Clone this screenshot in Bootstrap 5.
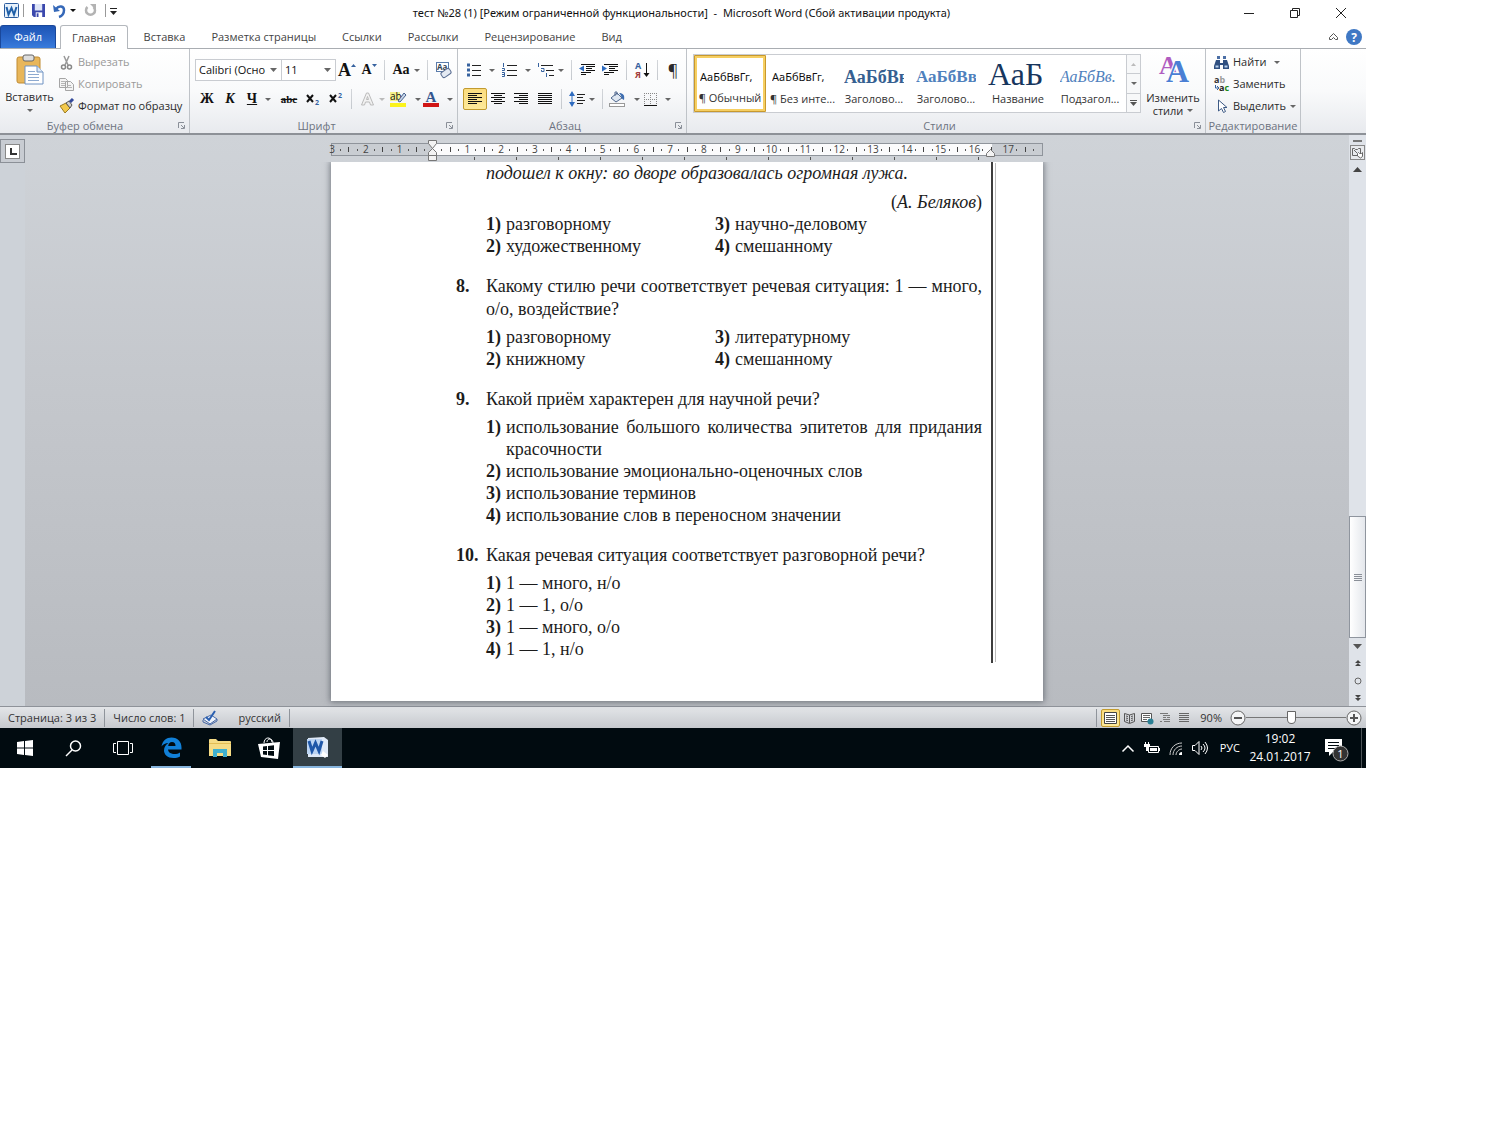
<!DOCTYPE html>
<html lang="ru">
<head>
<meta charset="utf-8">
<meta name="viewport" content="width=device-width, initial-scale=1">
<title>тест №28 (1) - Microsoft Word</title>
<link href="https://cdn.jsdelivr.net/npm/bootstrap@5.3.0/dist/css/bootstrap.min.css" rel="stylesheet">
<style>
body{font-family:"Open Sans","Noto Sans",sans-serif;font-size:11px;line-height:16px;color:#1e1e1e;background:#fff}
.desk{max-width:1366px}
svg{display:block;flex:none;overflow:visible}
.btn{--bs-btn-font-size:11px;--bs-btn-line-height:16px;--bs-btn-padding-x:0;--bs-btn-padding-y:0;--bs-btn-border-radius:2px;--bs-btn-color:#2b2b2b;--bs-btn-border-width:0;display:inline-flex;align-items:center;justify-content:center;white-space:nowrap}
.btn:disabled{color:#9a9a9a;opacity:1}
.caret{width:0;height:0;border:3px solid transparent;border-top-color:#666;border-bottom:0;flex:none}
.caret.dark{border-top-color:#111}
.caret.pale{border-top-color:#bbb}
.titlebar{height:25px}
.vline{width:1px;height:13px;background:#999}
.doc-title{font-family:"Noto Sans",sans-serif;font-size:11px;color:#111;padding-left:20px}
.winbtns{padding-right:2px}
.winbtn{width:46px;height:25px}
.tabs{height:24px;border-bottom:1px solid #a9adb2}
.tabs .btn{height:23px;padding:0 13px;color:#444}
.tabs .file-tab{width:56px;padding:0;color:#fff;background:linear-gradient(#1d55b5,#2a66c8 50%,#3a7cdc);border:1px solid #1a489b;border-bottom:0;border-radius:3px 3px 0 0;margin-right:4px}
.tabs .tab-on{height:24px;background:#fff;border:1px solid #b4b8bd;border-bottom:0;border-radius:3px 3px 0 0;padding:0 11px;margin-right:3px}
.ribbon{height:86px;background:linear-gradient(#fff,#f9fafb 50%,#e8eaee);border-bottom:2px solid #8d9197}
.rgroup{border-right:1px solid #bfc3c8;padding-top:2px}
.rlabel{height:15px;color:#6d7380;padding-right:4px}
.g-clip{width:190px}.g-font{width:268px;padding-left:5px}.g-para{width:229px;padding-left:5px}.g-style{width:519px;padding-left:6px}.g-edit{width:95px}
.bar{height:22px}
.row-a{margin-top:8px}.row-b{margin-top:7px}
.t22{width:22px;height:22px}.t24{width:24px;height:22px}.t32{width:32px;height:22px}.t34{width:34px;height:22px}.t36{width:36px;height:22px}
.sep{width:9px;height:20px;background:linear-gradient(#d3d6da,#c4c8cd) center/1px 100% no-repeat}
.t-on{background:linear-gradient(#fbdc7e,#fde99a);border:1px solid #c29b2f}
.combo{height:22px;border:1px solid #c9ccd1;border-radius:0;padding:0 14px 0 3px;font-size:11px;line-height:16px;color:#111;background-color:#fff;background-size:7px 4px;background-position:right 4px center;background-image:url("data:image/svg+xml,%3Csvg xmlns='http://www.w3.org/2000/svg' viewBox='0 0 7 4'%3E%3Cpath d='M0 0h7L3.5 4z' fill='%23666'/%3E%3C/svg%3E")}
.combo-name{width:87px}.combo-size{width:55px;margin-left:-1px}
.serif{font-family:"Liberation Serif",serif;font-weight:700;color:#111}
.s14{font-size:14px}.s16{font-size:16px}.s18{font-size:18px}
.paste{width:59px;padding-top:3px}
.gallery{height:59px;margin-top:3px;border:1px solid #c9ccd1;background:#fff}
.style-item{width:72px;height:57px;padding-bottom:3px;flex-direction:column;--bs-btn-border-radius:1px}
.style-item.picked{border:3px solid #f6cf62;padding-bottom:3px;outline:1px solid #c8992e;outline-offset:-1px}
.style-item .sample{height:34px;padding-top:6px;display:flex;align-items:center;justify-content:flex-start;width:60px;overflow:hidden;color:#111;font-family:"Noto Sans",sans-serif}
.style-item .cap{width:64px;text-align:center;height:16px;color:#333}
.style-item .h-one{font:700 18px/32px "Liberation Serif",serif;color:#365f91}
.style-item .h-two{font:700 17px/32px "Liberation Serif",serif;color:#4f81bd}
.style-item .h-title{font:32px/32px "Liberation Serif",serif;color:#17365d;padding-top:0}
.style-item .h-sub{font:italic 16px/32px "Liberation Serif",serif;color:#4f81bd}
.gal-scroll{width:14px;border-left:1px solid #c9ccd1}
.gal-scroll .btn{border-bottom:1px solid #c9ccd1;border-radius:0;background:#f7f8f9;flex:1}
.gal-scroll .btn:last-child{border-bottom:0}
.chg{width:64px;line-height:13px;padding-top:4px}
.work{background:linear-gradient(#cfd3d8,#c4c7cc 45%,#b8bbc0)}
.vruler{width:25px;background:#cdd2d8}
.tabstop{width:25px;height:24px;border:1px solid #8b9097;background:#c8ccd2}
.tabstop span{width:15px;height:15px;background:#fff;border:1px solid #888}
.rulerbox{height:27px;padding-top:8px}
.ruler{width:712px;height:13px;border:1px solid #8f949b;background:linear-gradient(90deg,#c9cdd2 101px,#fbfbfc 101px,#fbfbfc 660px,#c9cdd2 660px);font-size:10px;line-height:11px;color:#444;position:relative}
.cm{flex:1 1 0;display:flex;justify-content:space-between;align-items:center}
.cm>*{width:0;display:flex;justify-content:center}
.cm i::before{content:"";width:1px;height:2px;background:#555;flex:none}
.cm u::before{content:"";width:1px;height:5px;background:#444;flex:none}
.mark-l{position:absolute;left:96px;top:-4px}
.mark-r{position:absolute;left:654px;top:5px}
.stops{position:absolute;left:101px;top:13px;width:555px;height:3px;background:repeating-linear-gradient(90deg,transparent 0 41px,#555 41px 42px)}
.sheet{width:712px;background:#fff;box-shadow:0 0 6px 1px rgba(60,65,75,.6);padding:0 50px 38px 125px;clip-path:inset(0 -12px -12px -12px)}
.scan{border-right:2px solid #3d3d3d;box-shadow:3px 0 0 -1px #fff,4px 0 0 -1px #bbb;padding:0 9px 3px 0;font-family:"Liberation Serif",serif;font-size:18px;line-height:22px;color:#1c1c1c}
.scan ol,.scan p{margin:0;padding:0;list-style:none}
.scan .indent{padding-left:30px}
.scan .ask{display:flex;line-height:23px;margin:18px 0 5px;text-align:justify}
.ask b{width:30px;flex:none}
.ask span{flex:1}
.opts li{display:flex;text-align:justify}
.opts b{width:20px;flex:none}
.two{display:grid;grid-template-columns:229px 1fr}
.scan .author{margin-top:7px}
.vscroll{width:17px;background:#dfe3e9}
.vscroll .btn{width:17px;height:17px}
.vscroll .split{height:9px}
.thumb{height:122px;border:1px solid #8f959e;background:linear-gradient(90deg,#fff,#e4e7ec)}
.track{min-height:338px}
.status{height:22px;background:linear-gradient(#e3e5e8,#c6c9ce);border-top:1px solid #8e9299;color:#333}
.status .cell{border-right:1px solid #8f949b;height:18px;display:flex;align-items:center}
.zoomer{appearance:none;width:100px;height:16px;background:linear-gradient(#777,#777) center/100% 1px no-repeat;margin:0;display:block}
.zoomer::-webkit-slider-thumb{appearance:none;width:9px;height:13px;background:#fff;border:1px solid #666;border-radius:1px 1px 5px 5px}
.taskbar{height:40px;background:#010b10;color:#fff}
.taskbar .btn{height:40px;color:#fff;border-radius:0}
.taskbar .app{width:49px}
.taskbar .app-on{background:#333f45;border-bottom:2px solid #86b4dd}
.taskbar .app-run{width:40px;border-bottom:2px solid #86b4dd;margin:0 4px}
.tray{width:24px}
.clock{width:64px;font-size:12px;line-height:18px}
.peek{width:1px;height:40px;background:#4c5357}
</style>
<script src="https://cdn.jsdelivr.net/npm/bootstrap@5.3.0/dist/js/bootstrap.bundle.min.js"></script>
</head>
<body>
<div class="desk">
<header class="titlebar d-flex align-items-center">
  <div class="d-flex align-items-center ps-1 pb-1">
    <svg width="15" height="15" viewBox="0 0 15 15"><rect x=".5" y=".5" width="14" height="14" rx="1" fill="#e7f1fb" stroke="#2b5c9e"/><path d="M2.500 4l2 7.500L7.500 5l2.500 6.500L12.500 4" fill="none" stroke="#1f5fa8" stroke-width="2"/></svg>
    <span class="vline ms-1 me-2"></span>
    <button class="btn" aria-label="Сохранить"><svg width="13" height="13" viewBox="0 0 14 14"><path d="M0 0h14v14H2L0 12z" fill="#3b48ad"/><path d="M3 0h8v7H3z" fill="#dfe6f7"/><path d="M4 9h7v5H4z" fill="#fff"/><path d="M5 10h2v4H5z" fill="#3b48ad"/></svg></button>
    <button class="btn ms-2" aria-label="Отменить"><svg width="13" height="14"><path d="M3 5C6 1 11 2 11 6s-2 6-5 7" fill="none" stroke="#3568b8" stroke-width="2.500"/><path d="M0 1l1 7 6-1z" fill="#3568b8"/></svg><span class="caret dark ms-1"></span></button>
    <button class="btn ms-2" aria-label="Повторить" disabled><svg width="13" height="14"><path d="M3.500 3a4.500 4.500 0 1 0 6 0" fill="none" stroke="#b3b3b3" stroke-width="2.500"/><path d="M6 0h6v6z" fill="#b3b3b3"/></svg></button>
    <span class="vline ms-2 me-1"></span>
    <button class="btn flex-column" aria-label="Настройка панели"><svg width="7" height="8"><path d="M0 1.500h7" stroke="#222"/><path d="M0 4h7L3.500 8z" fill="#222"/></svg></button>
  </div>
  <div class="doc-title flex-fill text-center">тест №28 (1) [Режим ограниченной функциональности]&nbsp; -&nbsp; Microsoft Word (Сбой активации продукта)</div>
  <div class="winbtns d-flex">
    <button class="btn winbtn" aria-label="Свернуть"><svg width="10" height="10"><path d="M0 5.500h10" stroke="#222"/></svg></button>
    <button class="btn winbtn" aria-label="Восстановить"><svg width="10" height="10"><path d="M.5 2.500h7v7h-7zM2.500 2.500v-2h7v7h-2" fill="none" stroke="#222"/></svg></button>
    <button class="btn winbtn" aria-label="Закрыть"><svg width="10" height="10"><path d="M0 0l10 10M10 0L0 10" stroke="#222"/></svg></button>
  </div>
</header>
<nav class="tabs d-flex">
  <button class="btn file-tab">Файл</button>
  <button class="btn tab-on">Главная</button>
  <button class="btn">Вставка</button>
  <button class="btn">Разметка страницы</button>
  <button class="btn">Ссылки</button>
  <button class="btn">Рассылки</button>
  <button class="btn">Рецензирование</button>
  <button class="btn">Вид</button>
  <div class="ms-auto d-flex align-items-center gap-2 pe-1">
    <button class="btn p-0" aria-label="Свернуть ленту"><svg width="9" height="7"><path d="M.5 4.500l4-4 4 4v2h-2l-2-2-2 2h-2z" fill="#fff" stroke="#555"/></svg></button>
    <button class="btn p-0" aria-label="Справка"><svg width="16" height="16"><circle cx="8" cy="8" r="8" fill="#3f78c4"/><text x="8" y="12.500" font-size="12" font-weight="700" text-anchor="middle" fill="#fff">?</text></svg></button>
  </div>
</nav>
<section class="ribbon d-flex">
  <div class="rgroup g-clip d-flex flex-column">
    <div class="d-flex flex-fill">
      <button class="btn paste flex-column justify-content-start"><svg width="27" height="31"><rect x="1" y="3" width="23" height="26" rx="2" fill="#e8b65a" stroke="#c08b32"/><rect x="7" y="1" width="11" height="6" rx="2" fill="#ddd" stroke="#666"/><path d="M9 12h12l6 6v12H9z" fill="#fff" stroke="#6f92c2"/><path d="M21 12v6h6" fill="#dbe7f5" stroke="#6f92c2"/><path d="M12 17.500h7M12 20.500h11M12 23.500h11M12 26.500h11" stroke="#8eaad0"/></svg><span class="mt-1">Вставить</span><span class="caret mt-1"></span></button>
      <div class="d-flex flex-column align-items-start">
        <button class="btn bar gap-1" disabled><svg width="15" height="15"><path d="M5 1l4 9M10 1L6 10" stroke="#999" stroke-width="1.500"/><circle cx="4.500" cy="12" r="2" fill="none" stroke="#888" stroke-width="1.500"/><circle cx="10.500" cy="12" r="2" fill="none" stroke="#888" stroke-width="1.500"/></svg>Вырезать</button>
        <button class="btn bar gap-1" disabled><svg width="15" height="14"><path d="M.5 1.500h6l2 2v7h-8zM6.500 4.500h5l3 3v6h-8z" fill="#f4f4f4" stroke="#a5a5a5"/><path d="M2 4.500h4M2 6.500h4M2 8.500h4M8 8.500h4M8 10.500h5" stroke="#b5b5b5"/></svg>Копировать</button>
        <button class="btn bar gap-1"><svg width="15" height="14"><path d="M1 7l6-3 4 5-5 5z" fill="#f2c94c" stroke="#9b7b22"/><path d="M7 4l3-2 3 4-2 3z" fill="#cfcfcf" stroke="#555"/><path d="M11 3l3-3" stroke="#334a9a" stroke-width="3"/></svg>Формат по образцу</button>
      </div>
    </div>
    <div class="rlabel d-flex align-items-center"><span class="flex-fill text-center pe-2">Буфер обмена</span><svg width="7" height="7"><path d="M.5 6V.5H6M3 3l3 3M6.500 3v3.500H3" fill="none" stroke="#8a8f98"/></svg></div>
  </div>
  <div class="rgroup g-font d-flex flex-column">
    <div class="row-a d-flex align-items-center">
      <select class="form-select combo combo-name" aria-label="Шрифт"><option>Calibri (Осно</option></select>
      <select class="form-select combo combo-size" aria-label="Размер"><option>11</option></select>
      <button class="btn t22 serif s18" aria-label="Увеличить размер">A<svg width="5" height="14"><path d="M0 4h5L2.500 1z" fill="#36629f"/></svg></button>
      <button class="btn t22 serif s14" aria-label="Уменьшить размер">A<svg width="5" height="14"><path d="M0 1h5L2.500 4z" fill="#36629f"/></svg></button>
      <span class="sep"></span>
      <button class="btn t34 serif s14" aria-label="Регистр">Aa<span class="caret ms-1"></span></button>
      <span class="sep"></span>
      <button class="btn t24" aria-label="Очистить формат"><svg width="16" height="16"><rect x=".5" y=".5" width="12" height="9" fill="#fff" stroke="#5b7cab"/><text x="1" y="8" font-size="8" font-weight="700" fill="#345">Aa</text><rect x="5" y="8" width="10" height="6" rx="2" fill="#e4eaf3" stroke="#5b6f93" transform="rotate(-35 10 11)"/></svg></button>
    </div>
    <div class="row-b d-flex align-items-center">
      <button class="btn t24 serif s14">Ж</button>
      <button class="btn t22 serif s14 fst-italic">К</button>
      <button class="btn t36 serif s14"><span class="text-decoration-underline">Ч</span><span class="caret ms-2"></span></button>
      <button class="btn t24 serif text-decoration-line-through">abc</button>
      <button class="btn t24" aria-label="Подстрочный"><svg width="14" height="14"><path d="M1 3l6 7M7 3l-6 7" stroke="#111" stroke-width="2"/><text x="9" y="13" font-size="7" font-weight="700" fill="#36629f">2</text></svg></button>
      <button class="btn t22" aria-label="Надстрочный"><svg width="14" height="14"><path d="M1 3l6 7M7 3l-6 7" stroke="#111" stroke-width="2"/><text x="9" y="6" font-size="7" font-weight="700" fill="#36629f">2</text></svg></button>
      <span class="sep"></span>
      <button class="btn t32" aria-label="Эффекты текста" disabled><svg width="15" height="16"><path d="M1.500 14L6.500 2h2l5 12h-3l-1-3h-4l-1 3zM6.500 8.500h2l-1-3z" fill="#f2f2f2" stroke="#bbb"/></svg><span class="caret pale ms-1"></span></button>
      <button class="btn t34" aria-label="Цвет выделения"><svg width="17" height="16"><rect x="0" y="1" width="10" height="9" fill="#f4f08a"/><text x="0" y="9" font-size="10" fill="#111">ab</text><path d="M8 10l6-8 2 2-6 7z" fill="#c9d7ea" stroke="#46618d"/><path d="M0 12h16v4H0z" fill="#fbf31c"/></svg><span class="caret ms-2"></span></button>
      <button class="btn t32" aria-label="Цвет текста"><svg width="16" height="16"><text x="8" y="11" font-size="15" font-weight="700" text-anchor="middle" fill="#33568f" font-family="Liberation Serif">A</text><path d="M0 12h16v4H0z" fill="#d01616"/></svg><span class="caret ms-2"></span></button>
    </div>
    <div class="rlabel mt-auto d-flex align-items-center"><span class="flex-fill text-center pe-2">Шрифт</span><svg width="7" height="7"><path d="M.5 6V.5H6M3 3l3 3M6.500 3v3.500H3" fill="none" stroke="#8a8f98"/></svg></div>
  </div>
  <div class="rgroup g-para d-flex flex-column">
    <div class="row-a d-flex align-items-center">
      <button class="btn t36" aria-label="Маркеры"><svg width="14" height="14"><path d="M0 2h3M0 7h3M0 12h3" stroke="#36629f" stroke-width="3"/><path d="M5 2.500h9M5 7.500h9M5 12.500h9" stroke="#222"/></svg><span class="caret ms-2"></span></button>
      <button class="btn t34" aria-label="Нумерация"><svg width="15" height="14"><path d="M1.500 0v4M0 5.500h2.500v2H0M0 9.500h2.500v4H0M0 11.500h2" fill="none" stroke="#36629f"/><path d="M5 2.500h10M5 7.500h10M5 12.500h10" stroke="#222"/></svg><span class="caret ms-2"></span></button>
      <button class="btn t34" aria-label="Многоуровневый список"><svg width="17" height="14"><path d="M1.500 0v4M4 5.500h3v3H4.500v-1.500M9.500 10v4" fill="none" stroke="#36629f"/><path d="M4 2.500h12M9 7.500h8M12 12.500h5" stroke="#222"/></svg><span class="caret ms-1"></span></button>
      <span class="sep"></span>
      <button class="btn t22" aria-label="Уменьшить отступ"><svg width="16" height="14"><path d="M2 1.500h14M7 3.500h9M7 5.500h6M7 7.500h9M2 9.500h10M2 11.500h5" stroke="#111"/><path d="M0 5.500l5-3v6z" fill="#2f6cc0"/></svg></button>
      <button class="btn t24" aria-label="Увеличить отступ"><svg width="16" height="14"><path d="M2 1.500h14M7 3.500h9M7 5.500h6M7 7.500h9M2 9.500h10M2 11.500h5" stroke="#111"/><path d="M5 5.500l-5-3v6z" fill="#2f6cc0"/></svg></button>
      <span class="sep"></span>
      <button class="btn t22" aria-label="Сортировка"><svg width="15" height="16"><text x="0" y="7" font-size="9" font-weight="700" fill="#36629f">А</text><text x="0" y="16" font-size="9" font-weight="700" fill="#a23c3c">Я</text><path d="M11.500 1v13" stroke="#111"/><path d="M8.500 11h6l-3 4z" fill="#111"/></svg></button>
      <span class="sep"></span>
      <button class="btn t22 s16">¶</button>
    </div>
    <div class="row-b d-flex align-items-center">
      <button class="btn t24 t-on" aria-label="По левому краю"><svg width="14" height="12"><path d="M0 .5h14M0 2.500h9M0 4.500h14M0 6.500h9M0 8.500h14M0 10.500h9" stroke="#111"/></svg></button>
      <button class="btn t22" aria-label="По центру"><svg width="14" height="12"><path d="M0 .5h14M3 2.500h8M0 4.500h14M3 6.500h8M0 8.500h14M3 10.500h8" stroke="#111"/></svg></button>
      <button class="btn t24" aria-label="По правому краю"><svg width="14" height="12"><path d="M0 .5h14M5 2.500h9M0 4.500h14M5 6.500h9M0 8.500h14M5 10.500h9" stroke="#111"/></svg></button>
      <button class="btn t24" aria-label="По ширине"><svg width="14" height="12"><path d="M0 .5h14M0 2.500h14M0 4.500h14M0 6.500h14M0 8.500h14M0 10.500h14" stroke="#111"/></svg></button>
      <span class="sep"></span>
      <button class="btn t32" aria-label="Интервал"><svg width="16" height="16"><path d="M3 3v10" stroke="#2f6cc0"/><path d="M0 5h6L3 0zM0 11h6l-3 5z" fill="#2f6cc0"/><path d="M8 3.500h8M8 6.500h6M8 9.500h8M8 12.500h6" stroke="#222"/></svg><span class="caret ms-1"></span></button>
      <span class="sep"></span>
      <button class="btn t34" aria-label="Заливка"><svg width="17" height="16"><path d="M2 7l6-5 5 5-6 4z" fill="#dfe7f1" stroke="#50698f"/><path d="M6 5V1h2v3" fill="none" stroke="#50698f"/><path d="M10 2c4 0 6 2 5 7-3-1-2-4-5-7z" fill="#3d6db0"/><rect x=".5" y="12.500" width="15" height="3" fill="#fff" stroke="#999"/></svg><span class="caret ms-2"></span></button>
      <button class="btn t32" aria-label="Границы"><svg width="13" height="13"><path d="M.5 0v12M6.500 0v12M12.500 0v12M0 .5h13M0 6.500h13" stroke="#888" stroke-dasharray="1 1"/><path d="M0 12.500h13" stroke="#111"/></svg><span class="caret ms-2"></span></button>
    </div>
    <div class="rlabel mt-auto d-flex align-items-center"><span class="flex-fill text-center pe-2">Абзац</span><svg width="7" height="7"><path d="M.5 6V.5H6M3 3l3 3M6.500 3v3.500H3" fill="none" stroke="#8a8f98"/></svg></div>
  </div>
  <div class="rgroup g-style d-flex flex-column">
    <div class="d-flex">
      <div class="gallery d-flex">
        <button class="btn style-item picked"><span class="sample">АаБбВвГг,</span><span class="cap">¶ Обычный</span></button>
        <button class="btn style-item"><span class="sample">АаБбВвГг,</span><span class="cap">¶ Без инте...</span></button>
        <button class="btn style-item"><span class="sample h-one">АаБбВв</span><span class="cap">Заголово...</span></button>
        <button class="btn style-item"><span class="sample h-two">АаБбВв</span><span class="cap">Заголово...</span></button>
        <button class="btn style-item"><span class="sample h-title">АаБ</span><span class="cap">Название</span></button>
        <button class="btn style-item"><span class="sample h-sub">АаБбВв.</span><span class="cap">Подзагол...</span></button>
        <div class="gal-scroll d-flex flex-column">
          <button class="btn" aria-label="Вверх" disabled><svg width="5" height="3"><path d="M0 3h5L2.500 0z" fill="#bbb"/></svg></button>
          <button class="btn" aria-label="Вниз"><span class="caret"></span></button>
          <button class="btn" aria-label="Ещё"><svg width="7" height="6"><path d="M0 .5h7" stroke="#555"/><path d="M0 2h7L3.500 6z" fill="#555"/></svg></button>
        </div>
      </div>
      <button class="btn chg flex-column justify-content-start"><svg width="29" height="28"><g font-family="Liberation Serif" font-weight="700"><text x="0" y="19" font-size="26" fill="#b05cc0">A</text><text x="7" y="27" font-size="32" fill="#4a7fd4" stroke="#fff" stroke-width="2" paint-order="stroke">A</text></g></svg><span class="mt-2">Изменить</span><span class="d-flex align-items-center gap-1">стили<span class="caret"></span></span></button>
    </div>
    <div class="rlabel mt-auto d-flex align-items-center"><span class="flex-fill text-center pe-2">Стили</span><svg width="7" height="7"><path d="M.5 6V.5H6M3 3l3 3M6.500 3v3.500H3" fill="none" stroke="#8a8f98"/></svg></div>
  </div>
  <div class="rgroup g-edit d-flex flex-column">
    <div class="d-flex flex-column align-items-start ps-2">
      <button class="btn bar gap-1"><svg width="15" height="13"><path d="M2 4h4v3h3V4h4l2 6v3H9V9H6v4H0v-3z" fill="#2f4f80"/><path d="M3 0h3v3H3zM9 0h3v3H9z" fill="#4b6ea5"/><path d="M1.500 9.500h3v2h-3zM10.500 9.500h3v2h-3z" fill="#b9d2ee"/></svg>Найти<span class="caret ms-1"></span></button>
      <button class="btn bar gap-1"><svg width="15" height="14"><text x="0" y="6" font-size="9" font-weight="700" fill="#333">a<tspan fill="#999">b</tspan></text><text x="5" y="14" font-size="9" font-weight="700" fill="#222">a<tspan fill="#1a8a1a">c</tspan></text><path d="M1.500 8v3h3M3 9l2 2-2 2" fill="none" stroke="#36629f"/></svg>Заменить</button>
      <button class="btn bar gap-1"><svg width="15" height="15"><path d="M4.500 1v11l3-2.500 2 4 2-1-2-4h3.500z" fill="#fff" stroke="#3d5a85"/></svg>Выделить<span class="caret"></span></button>
    </div>
    <div class="rlabel mt-auto text-center pe-0 text-nowrap">Редактирование</div>
  </div>
</section>
<main class="work d-flex">
  <div class="vruler"><div class="tabstop d-flex align-items-center justify-content-center mt-1"><span><svg width="13" height="13"><path d="M5 3v6h6" fill="none" stroke="#333" stroke-width="2"/></svg></span></div></div>
  <div class="flex-fill d-flex flex-column align-items-center pb-1">
    <div class="rulerbox">
      <div class="ruler d-flex">
        <div class="cm"><span>3</span><i></i><u></u><i></i><span></span></div><div class="cm"><span>2</span><i></i><u></u><i></i><span></span></div><div class="cm"><span>1</span><i></i><u></u><i></i><span></span></div>
        <div class="cm"><span></span><i></i><u></u><i></i><span></span></div><div class="cm"><span>1</span><i></i><u></u><i></i><span></span></div><div class="cm"><span>2</span><i></i><u></u><i></i><span></span></div>
        <div class="cm"><span>3</span><i></i><u></u><i></i><span></span></div><div class="cm"><span>4</span><i></i><u></u><i></i><span></span></div><div class="cm"><span>5</span><i></i><u></u><i></i><span></span></div>
        <div class="cm"><span>6</span><i></i><u></u><i></i><span></span></div><div class="cm"><span>7</span><i></i><u></u><i></i><span></span></div><div class="cm"><span>8</span><i></i><u></u><i></i><span></span></div>
        <div class="cm"><span>9</span><i></i><u></u><i></i><span></span></div><div class="cm"><span>10</span><i></i><u></u><i></i><span></span></div><div class="cm"><span>11</span><i></i><u></u><i></i><span></span></div>
        <div class="cm"><span>12</span><i></i><u></u><i></i><span></span></div><div class="cm"><span>13</span><i></i><u></u><i></i><span></span></div><div class="cm"><span>14</span><i></i><u></u><i></i><span></span></div>
        <div class="cm"><span>15</span><i></i><u></u><i></i><span></span></div><div class="cm"><span>16</span><i></i><u></u><span></span><span></span></div><div class="cm"><span>17</span><i></i><u></u><i></i><span></span></div>
        <span class="stops"></span>
        <svg class="mark-l" width="9" height="22"><path d="M.5.5h8v3l-4 5-4-5zM4.500 8.500l4 4v3h-8v-3zM.5 15.500h8v5h-8z" fill="#f3f3f3" stroke="#777"/></svg>
        <svg class="mark-r" width="9" height="9"><path d="M4.500.5l4 4v3h-8v-3z" fill="#f3f3f3" stroke="#777"/></svg>
      </div>
    </div>
    <article class="sheet">
      <div class="scan">
        <p class="indent fst-italic">подошел к окну: во дворе образовалась огромная лужа.</p>
        <p class="author text-end">(<i>А. Беляков</i>)</p>
        <ol class="opts two indent"><li><b>1)</b>разговорному</li><li><b>3)</b>научно-деловому</li><li><b>2)</b>художественному</li><li><b>4)</b>смешанному</li></ol>
        <p class="ask"><b>8.</b><span>Какому стилю речи соответствует речевая ситуация: 1 — много, о/о, воздействие?</span></p>
        <ol class="opts two indent"><li><b>1)</b>разговорному</li><li><b>3)</b>литературному</li><li><b>2)</b>книжному</li><li><b>4)</b>смешанному</li></ol>
        <p class="ask"><b>9.</b><span>Какой приём характерен для научной речи?</span></p>
        <ol class="opts indent"><li><b>1)</b><span>использование большого количества эпитетов для придания красочности</span></li><li><b>2)</b>использование эмоционально-оценочных слов</li><li><b>3)</b>использование терминов</li><li><b>4)</b>использование слов в переносном значении</li></ol>
        <p class="ask"><b>10.</b><span>Какая речевая ситуация соответствует разговорной речи?</span></p>
        <ol class="opts indent"><li><b>1)</b>1 — много, н/о</li><li><b>2)</b>1 — 1, о/о</li><li><b>3)</b>1 — много, о/о</li><li><b>4)</b>1 — 1, н/о</li></ol>
      </div>
    </article>
  </div>
  <div class="vscroll d-flex flex-column align-items-center">
    <button class="btn split" aria-label="Разделить окно"><svg width="9" height="9"><path d="M0 6h9" stroke="#777" stroke-width="2"/></svg></button>
    <button class="btn" aria-label="Показать линейку"><svg width="15" height="15"><rect x=".5" y=".5" width="14" height="14" fill="#e8eaed" stroke="#888"/><path d="M2.500 3.500h2l1 1h2l1-1h2v7h-8zM4 5l3 3" fill="none" stroke="#666"/><path d="M7.500 8.500l1-1 1 1h2l1-1v4l-2 1.500-3-2z" fill="#fff" stroke="#666"/></svg></button>
    <button class="btn" aria-label="Прокрутить вверх"><svg width="9" height="5"><path d="M0 5h9L4.500 0z" fill="#444"/></svg></button>
    <div class="track flex-fill"></div>
    <div class="thumb d-flex align-items-center justify-content-center w-100"><svg width="8" height="7"><path d="M0 .5h8M0 2.500h8M0 4.500h8M0 6.500h8" stroke="#8a8f98"/></svg></div>
    <button class="btn" aria-label="Прокрутить вниз"><svg width="9" height="5"><path d="M0 0h9L4.500 5z" fill="#555"/></svg></button>
    <button class="btn" aria-label="Предыдущая страница"><svg width="6" height="7"><path d="M0 3h6L3 0zM0 6h6L3 3z" fill="#444"/></svg></button>
    <button class="btn" aria-label="Выбор объекта"><svg width="8" height="8"><circle cx="4" cy="4" r="3" fill="none" stroke="#666"/></svg></button>
    <button class="btn" aria-label="Следующая страница"><svg width="6" height="7"><path d="M0 1h6L3 4zM0 4h6L3 7z" fill="#444"/></svg></button>
  </div>
</main>
<footer class="status d-flex align-items-center">
  <div class="cell ps-2 pe-2">Страница: 3 из 3</div>
  <div class="cell ps-2 pe-2">Число слов: 1</div>
  <div class="cell ps-2 pe-2"><svg width="16" height="14"><path d="M1 8l8-4 6 4-7 5z" fill="#eef3fb" stroke="#4668a6"/><path d="M1 9v2l7 3 7-4V8" fill="none" stroke="#4668a6"/><path d="M4 6l3 3 6-9" fill="none" stroke="#2a5fb0" stroke-width="2"/></svg><span class="ms-3 ps-1">русский</span></div>
  <div class="cell ms-auto"></div>
  <div class="d-flex align-items-center ps-1 pe-1">
    <button class="btn t-on" aria-label="Разметка страницы"><svg width="17" height="16"><path d="M2.500 2.500h12v11h-12z" fill="#fff" stroke="#444"/><path d="M4 5.500h9M4 7.500h9M4 9.500h9M4 11.500h9" stroke="#555"/></svg></button>
    <button class="btn" aria-label="Режим чтения"><svg width="18" height="16"><path d="M4.500 3.500l5 1.500 5-1.500v8l-5 2-5-2zM9.500 5v8M6 6l2 .5M6 8l2 .5M11 6.500l2-.5M11 8.500l2-.5M6 10l2 .5M11 10.500l2-.5" fill="none" stroke="#555"/></svg></button>
    <button class="btn" aria-label="Веб-документ"><svg width="18" height="16"><path d="M3.500 3.500h10v8h-10z" fill="#fff" stroke="#555"/><path d="M5 5.500h7M5 7.500h7M5 9.500h4" stroke="#666"/><circle cx="12.500" cy="11.500" r="3" fill="#2a7f94"/></svg></button>
    <button class="btn" aria-label="Структура"><svg width="18" height="16"><path d="M4 3.500h8M7 5.500h7M7 7.500h3M11 7.500h3M7 9.500h7M4 11.500h2M8 11.500h6" stroke="#777"/></svg></button>
    <button class="btn" aria-label="Черновик"><svg width="18" height="16"><path d="M5 3.500h10M5 5.500h10M5 7.500h10M5 9.500h10M5 11.500h10" stroke="#666"/></svg></button>
    <span class="ms-2 me-2">90%</span>
    <button class="btn" aria-label="Уменьшить"><svg width="16" height="16"><circle cx="8" cy="8" r="7" fill="#f4f5f6" stroke="#666"/><path d="M4 8h8" stroke="#555" stroke-width="2"/></svg></button>
    <input class="zoomer" type="range" min="0" max="100" value="45" aria-label="Масштаб">
    <button class="btn" aria-label="Увеличить"><svg width="16" height="16"><circle cx="8" cy="8" r="7" fill="#f4f5f6" stroke="#666"/><path d="M4 8h8M8 4v8" stroke="#555" stroke-width="2"/></svg></button>
  </div>
</footer>
<div class="taskbar d-flex align-items-center">
  <button class="btn app" aria-label="Пуск"><svg width="16" height="16"><path d="M0 2l7-1v6.500H0zM8 1l8-1v7.500H8zM0 8.500h7V15l-7-1zM8 8.500h8V16l-8-1z" fill="#fff"/></svg></button>
  <button class="btn app" aria-label="Поиск"><svg width="17" height="17"><circle cx="10.500" cy="6" r="5" fill="none" stroke="#fff" stroke-width="1.500"/><path d="M7 10l-6 6" stroke="#fff" stroke-width="1.500"/></svg></button>
  <button class="btn app" aria-label="Представление задач"><svg width="20" height="14"><path d="M4.500.5h11v13h-11zM3 2.500H.5v9H3M17 2.500h2.500v9H17" fill="none" stroke="#fff"/></svg></button>
  <button class="btn app-run" aria-label="Edge"><svg width="21" height="21" viewBox="0 0 21 21"><path d="M.5 9.500C1.500 3.500 5.500.5 10.500.5 17 .5 20.500 5 20.500 10.500v2H7c.3 3 3 4.500 6.500 4.500 2 0 4-.5 5.500-1.500v4c-2 1-4 1.500-6.500 1.500C6.500 21 3 17.500 3 13.500c0-3.500 2-6 4.500-7.500C4.500 6 2 7.500.5 9.500zM7.200 9h7.300c0-2.500-1.200-4-3.500-4S7.400 6.700 7.200 9z" fill="#1180d8"/></svg></button>
  <button class="btn app" aria-label="Проводник"><svg width="22" height="18"><path d="M0 1q0-1 1-1h6l2 2h12q1 0 1 1v14H0z" fill="#f6dc85"/><path d="M0 4h22v1H0z" fill="#e3bd54"/><path d="M4 18v-8h14v8h-4v-4H8v4z" fill="#3fb0cf"/></svg></button>
  <button class="btn app" aria-label="Магазин"><svg width="22" height="22"><path d="M6 6c0-6 7-7 8-1M9 5c0-4 6-4 6 1" fill="none" stroke="#fff"/><path d="M0 7l22-2-2 17-17-2z" fill="#fff"/><path d="M5 9.500l4-.5v4H5zM10 9l6-.7V13h-6zM5 14h4v4l-4-.5zM10 14h6v5l-6-.8z" fill="#010b10"/></svg></button>
  <button class="btn app app-on" aria-label="Word"><svg width="21" height="21"><path d="M1 1l16-1 4 3v17H1z" fill="#dfe9f7"/><path d="M0 2h15v15H0z" fill="#bcd4f2"/><path d="M2 4l3 10 3.500-8 3.500 8 3-10" fill="none" stroke="#1f57a8" stroke-width="3"/><path d="M16 14l5 4-3 3-4-3z" fill="#fff"/></svg></button>
  <div class="ms-auto d-flex align-items-center">
    <button class="btn tray" aria-label="Скрытые значки"><svg width="12" height="7"><path d="M.5 6.500l5.500-5.500 5.500 5.500" fill="none" stroke="#fff" stroke-width="1.500"/></svg></button>
    <button class="btn tray" aria-label="Батарея"><svg width="16" height="12"><path d="M4.500 4.500h10v6h-10zM15.500 6v3" fill="none" stroke="#fff"/><path d="M6 6h7v3H6zM0 2h6v3H4v4H2V5H0zM1 0h1v2H1zM4 0h1v2H4z" fill="#fff"/></svg></button>
    <button class="btn tray" aria-label="Wi-Fi"><svg width="13" height="13"><path d="M1 13C1 6 6 1 13 1M4 13c0-5 4-9 9-9M7 13c0-3 3-6 6-6" fill="none" stroke="#ccc"/><path d="M10 13a3 3 0 0 1 3-3v3z" fill="#fff"/></svg></button>
    <button class="btn tray" aria-label="Звук"><svg width="16" height="14"><path d="M.5 4.500H3l4-4v13l-4-4H.5zM9 5q2 2 0 4M11 3q4 4 0 8M13 1q5 6 0 12" fill="none" stroke="#fff"/></svg></button>
    <button class="btn px-2">РУС</button>
    <div class="clock text-center">19:02<br>24.01.2017</div>
    <button class="btn app" aria-label="Уведомления"><svg width="24" height="24"><path d="M0 3h17v13H8l-4 4v-4H0z" fill="#fff"/><path d="M3 6.500h11M3 9.500h11M3 12.500h7" stroke="#010b10"/><circle cx="15.500" cy="17.500" r="7.500" fill="#333" stroke="#aaa"/><text x="15.500" y="21.500" font-size="11" text-anchor="middle" fill="#fff">1</text></svg></button>
    <span class="peek me-1"></span>
  </div>
</div>
</div>
</body>
</html>
